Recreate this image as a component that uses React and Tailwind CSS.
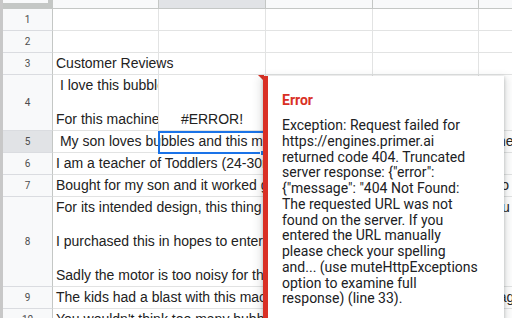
import React from "react";

const rowHead = "w-[50px] shrink-0 flex items-center justify-center border-r border-b border-r-[#c4c7c5] border-b-[#dadce0] text-[10px] text-[#4d4d4d] font-['Roboto',Arial,sans-serif]";
const cell = "shrink-0 border-r border-b border-[#e2e3e3]";

const errorLines = [
  "Exception: Request failed for",
  "https://engines.primer.ai",
  "returned code 404. Truncated",
  'server response: {"error":',
  '{"message": "404 Not Found:',
  "The requested URL was not",
  "found on the server. If you",
  "entered the URL manually",
  "please check your spelling",
  "and... (use muteHttpExceptions",
  "option to examine full",
  "response) (line 33).",
];

const EmptyRow = ({ n }) => (
  <div className="flex h-[22px] shrink-0">
    <div className={`${rowHead} bg-[#f8f9fa]`}>{n}</div>
    <div className={`${cell} w-[106px]`} />
    <div className={`${cell} w-[107px]`} />
    <div className={`${cell} w-[107px]`} />
    <div className={`${cell} w-[106px]`} />
    <div className="flex-1 border-b border-[#e2e3e3]" />
  </div>
);

const TextRow = ({ n, height = "h-[22px]", active = false, children }) => (
  <div className={`flex shrink-0 ${height}`}>
    <div className={`${rowHead} ${active ? "bg-[#e1e3e6]" : "bg-[#f8f9fa]"}`}>{n}</div>
    <div className="flex-1 min-w-0 flex items-end overflow-hidden border-b border-[#e2e3e3] pl-[3px] pb-[2px] whitespace-pre text-[14px] leading-[17px] text-[#222]">
      <div>{children}</div>
    </div>
  </div>
);

export default function App() {
  return (
    <div className="relative w-[512px] h-[318px] overflow-hidden bg-white flex font-['Liberation_Sans',Arial,sans-serif]">
      {/* left gutter */}
      <div className="w-[3px] shrink-0 bg-[#c8c8c8]" />

      <div className="flex-1 min-w-0 flex flex-col">
        {/* column headers */}
        <div className="flex h-[9px] shrink-0">
          <div className="w-[50px] shrink-0 bg-[#f8f9fa] border-r-[5px] border-b-[6px] border-[#c4c7c5]" />
          <div className="w-[106px] shrink-0 bg-[#f8f9fa] border-r border-b border-[#c4c7c5]" />
          <div className="w-[107px] shrink-0 bg-[#e1e3e6] border-r border-b border-[#c4c7c5]" />
          <div className="w-[107px] shrink-0 bg-[#f8f9fa] border-r border-b border-[#c4c7c5]" />
          <div className="w-[106px] shrink-0 bg-[#f8f9fa] border-r border-b border-[#c4c7c5]" />
          <div className="flex-1 bg-[#f8f9fa] border-b border-[#c4c7c5]" />
        </div>

        <EmptyRow n={1} />
        <EmptyRow n={2} />

        <div className="flex h-[22px] shrink-0">
          <div className={`${rowHead} bg-[#f8f9fa]`}>3</div>
          <div className={`${cell} w-[106px] flex items-end pl-[3px] pb-[2px] text-[14px] leading-[17px] text-[#222] whitespace-nowrap`}>
            Customer Reviews
          </div>
          <div className={`${cell} w-[107px]`} />
          <div className={`${cell} w-[107px]`} />
          <div className={`${cell} w-[106px]`} />
          <div className="flex-1 border-b border-[#e2e3e3]" />
        </div>

        <div className="flex h-[56px] shrink-0">
          <div className={`${rowHead} bg-[#f8f9fa]`}>4</div>
          <div className={`${cell} w-[106px] flex items-end overflow-hidden pl-[3px] pb-[2px] text-[14px] leading-[17px] text-[#222] whitespace-pre`}>
            <div>{" I love this bubble machine!\n\nFor this machine's price"}</div>
          </div>
          <div className={`${cell} w-[107px] flex items-end justify-center pb-[2px] text-[14px] leading-[17px] text-[#222]`}>
            #ERROR!
          </div>
          <div className={`${cell} w-[107px]`} />
          <div className={`${cell} w-[106px]`} />
          <div className="flex-1 border-b border-[#e2e3e3]" />
        </div>

        <TextRow n={5} active>
          {" My son loves bubbles and this machine makes tons of them, he loves these"}
        </TextRow>
        <TextRow n={6}>
          {"I am a teacher of Toddlers (24-30months) and they love bubbles, this is"}
        </TextRow>
        <TextRow n={7}>
          {"Bought for my son and it worked great for a few days until it stopped, I go"}
        </TextRow>
        <TextRow n={8} height="h-[90px]">
          {"For its intended design, this thing works well and does what it says, if you\n\nI purchased this in hopes to entertain my daughter and her friends in\n\nSadly the motor is too noisy for the kids and the bubbles are just not tall"}
        </TextRow>
        <TextRow n={9}>
          {"The kids had a blast with this machine, bubbles everywhere in the yard again"}
        </TextRow>
        <TextRow n={10}>
          {"You wouldn't think too many bubbles could be a problem but it can be"}
        </TextRow>
      </div>

      {/* selected cell B5 */}
      <div className="absolute left-[158px] top-[131px] w-[107px] h-[23px] border-2 border-[#1a73e8]" />
      <div className="absolute left-[260px] top-[150px] w-[6px] h-[6px] bg-[#1a73e8] border border-white" />

      {/* error marker on B4 */}
      <div className="absolute left-[258px] top-[75px] w-0 h-0 border-t-[6px] border-t-[#d93025] border-l-[6px] border-l-transparent" />

      {/* error tooltip */}
      <div className="absolute left-[263px] top-[76px] w-[241px] h-[262px] bg-white border-l-[5px] border-[#d93025] pl-[14px] pt-[14px] shadow-[0_1px_3px_rgba(60,64,67,0.3),0_4px_8px_3px_rgba(60,64,67,0.15)] font-['Roboto',Arial,sans-serif]">
        <div className="text-[14px] leading-[20px] font-bold text-[#d93025]">Error</div>
        <div className="mt-[8px] text-[14px] leading-[15.75px] text-[#202124]">
          {errorLines.map((line) => (
            <div key={line} className="whitespace-nowrap">{line}</div>
          ))}
        </div>
      </div>
    </div>
  );
}
